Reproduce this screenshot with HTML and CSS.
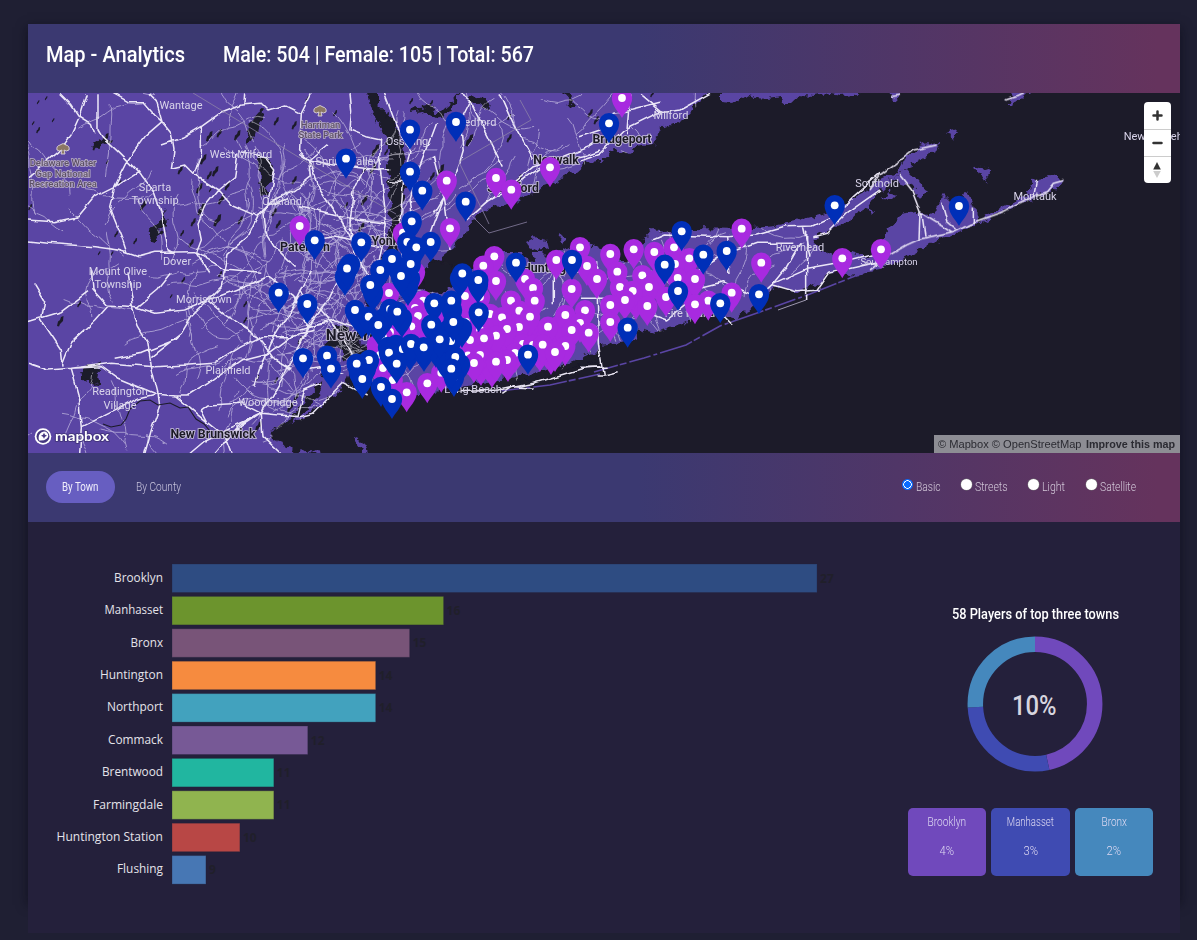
FILE: index.html
```html
<!DOCTYPE html>
<html lang="en">
<head>
<meta charset="utf-8">
<title>Map - Analytics</title>
<link rel="stylesheet" href="styles.css">
</head>
<body>
<main class="card">
  <header class="band head">
    <h1 class="fit title" data-w="139">Map - Analytics</h1>
    <div class="fit title" data-w="311">Male: 504 | Female: 105 | Total: 567</div>
  </header>

  <section class="map">
    <svg class="canvas" viewBox="28 93 1152 360" width="1152" height="360">
      <defs>
        <filter id="coast" filterUnits="userSpaceOnUse" x="20" y="80" width="1170" height="380"><feTurbulence type="fractalNoise" baseFrequency=".11" numOctaves="3" seed="4"/><feDisplacementMap in="SourceGraphic" scale="11" xChannelSelector="R" yChannelSelector="G"/></filter>
        <filter id="bend" filterUnits="userSpaceOnUse" x="20" y="80" width="1170" height="380"><feTurbulence type="fractalNoise" baseFrequency=".06" numOctaves="2" seed="9"/><feDisplacementMap in="SourceGraphic" scale="6" xChannelSelector="R" yChannelSelector="G"/><feGaussianBlur stdDeviation=".3"/></filter>
        <path id="pin" d="M0 20C-2.5 14.500-10.200 8.500-10.200 0a10.200 10.200 0 1 1 20.400 0C10.200 8.500 2.500 14.500 0 20z"/>
        <g id="tree"><path d="M-6 1q-1-4 3-5 3-3 6 0 4 1 3 5-3 2-5 0l1 4h-4l1-4q-3 2-5 0z" fill="#8b7764" stroke="#e9e2ea" stroke-width=".8"/></g>
        <clipPath id="land">
          <path d="M20 85H716L700 102 685 117 676 122 661 128 654 144 638 147 626 153 608 149 611 158 600 162 585 163 575 172 560 180 548 183 530 195 515 201 500 205 480 212 470 224 462 237 452 248 440 258 430 263 424 272 410 284 398 300 386 318 372 334 372 346 358 352 348 372 342 390 325 400 305 418 285 425 268 432 275 441 290 447 302 460H20z"/>
          <path d="M362 372 368 345 386 318 398 300 415 286 428 293 447 292 455 280 470 270 482 258 500 252 520 252 530 262 545 260 555 255 570 247 590 243 602 250 625 262 640 256 644 238 651 230 665 232 692 228 740 229 775 226 800 220 830 212 850 200 870 190 880 180 898 172 905 155 912 155 920 146 938 142 934 152 920 158 905 168 890 182 875 195 868 207 855 215 845 222 825 232 812 240 818 248 838 258 850 252 868 256 885 245 885 233 900 215 915 213 930 215 940 205 942 195 950 203 963 200 968 190 974 208 978 222 1000 208 1018 200 1030 190 1033 180 1050 176 1064 180 1050 192 1030 200 1000 213 960 232 930 244 910 256 880 270 850 276 835 270 815 285 800 292 790 290 775 285 765 300 745 310 735 322 725 315 700 315 680 325 655 332 640 328 635 340 600 345 590 355 565 368 540 376 500 382 450 388 420 395 385 395z"/>
        </clipPath>
      </defs>
      <rect x="28" y="93" width="1152" height="360" fill="#1c1b29"/>
      <g class="land" filter="url(#coast)">
        <rect x="0" y="60" width="1200" height="420" clip-path="url(#land)"/>
        <path d="M722 90H866L855 94 842 95 830 93 815 96 800 95 790 104 780 97 768 99 755 98 747 96 733 105 722 104z"/>
        <path d="M887 90h18l-4 5-6 4-7-3zM1010 90h20l-9 9-10 4-6 0 8-6zM950 132l8-2-5 9-5-2zM972 169l10-4 9 6-4 5 1 8-5-8zM906 168l5 6 10 6 6 12-6 6-7-10-12-4-10-4zM888 190l10 3-6 6-12-1zM866 204l6 8-3 4z"/>
        <path d="M526 241l8-4 12 3 2 8-10 2-8-4zM559 234l5 4-2 8-4-4zM532 252h10l8 8-14 6z"/>
        <path d="M298 453l6-5 6 4 8-4 8 6zM355 438l5-1 4 6 3 12-5-2-3-9z"/>
      </g>
      <path d="M868 271l-58 23-50 18-40 14-34 19-42 13-50 14M600 374l-50 11-50 6" fill="none" stroke="#5a45a4" stroke-width="1.6" stroke-dasharray="22 3 7 2 34 3 4 3"/>
      <g class="water" filter="url(#coast)">
        <path d="M369 90 373 115 384 132 389 150 387 168 390 200 391 225 382 262 370 295 358 325 352 346 360 346 368 325 380 295 391 262 398 240 402 205 406 168 401 140 394 120 378 105 378 90z"/>
        <path d="M326 338l10-12 12 0 8 12-3 15-8 7-6-14-8 3-4 18-4 12-3-4 5-20zM424 268l16-8 14 6 4 18-12 6-18 0-6-10zM345 343l24 2-4 16-10 6-8-10z"/>
        <path d="M500 378l30-3 40-12 20-8 10 4-30 10-40 12-30 2z"/>
        <path d="M268 430l10-4 14-8 14-20 14-15 2 8-14 18-20 16z"/>
        <path d="M252 120l7-8 5-4 2 6-8 10-4 14-5 8-2-6zM259 154l8 4 6 10-2 14-6 14-7-4 2-16zM148 228l12-6 4-12 3 14-7 8-6 10-6-2 2-8zM82 368l18-7-2 20-16-2zM81 372l10 1 8 8-4 4-12-5zM92 147l10-8 10-2-4 6-12 6z"/>
        <path d="M84 371l8 1 9 8-2 5-7-1-8-6z"/>
        <path d="M410 108l16-2 12 8 12-10 10-12-3 10-10 14-12 2-14-8-12 2zM468 95l18 2 4 12-10-2-14-6zM565 93l12 14-4 0-11-12z"/>
      </g>
      <g id="ponds" fill="#1c1b29"></g>
      <g filter="url(#bend)" fill="none" stroke="#f3effc" stroke-linejoin="round">
        <g id="minor" clip-path="url(#land)" stroke-width=".9" opacity=".55"></g>
        <g id="major" stroke-width="4.600" opacity=".95">
          <g transform="translate(28 90) scale(.3333)"><path d="M255 10 300 35 345 35 380 75 402 95 430 130 438 180 430 235 470 225 500 255 570 300 610 345 690 380 720 350 780 325M360 10 385 35 402 95 350 140 300 210 260 290 245 350 290 460 300 490M210 10 210 120 222 140 270 185 330 245 380 310 400 370 420 480 440 490M402 165 460 145 520 110 575 70 640 45 700 40 720 60 770 45 820 70 815 180 845 210 900 165M850 10 820 70M650 10 648 40M0 390 80 395 150 380 200 320 260 290 330 245M0 453 60 460 200 470 270 480 300 490 330 500 380 487 500 485 560 520 590 540 700 550M95 10 130 45 150 75 190 100 200 130M175 10 155 75 130 130 90 185 0 260M845 210 850 260 800 300 740 330 705 370 710 420 740 470 800 530M570 300 530 350 510 400 520 450 505 490 545 552M630 190 620 260 570 300M720 350 740 240 710 200 640 185M520 110 520 200 500 255M690 380 660 440 600 490 590 552"/></g>
          <g transform="translate(28 270) scale(.3333)"><path d="M0 280 60 300 130 295 250 280 380 290 480 285 560 280 640 230 700 200 780 200 860 180M130 295 150 370 160 470 155 552M310 100 330 170 360 220 370 290 390 370 395 410 370 480 350 552M160 470 240 430 330 385 385 372 440 378 480 410 540 460 590 500 610 552M440 378 480 378 540 340 640 270 720 250 800 190M130 295 220 290 270 325 385 372M190 0 195 60 235 105 330 110 390 60 430 10M300 10 315 100M370 260 460 190 490 140 540 90 580 50 590 0M240 105 200 150 130 215 105 280M20 40 50 90 40 150 100 240 105 290M0 155 100 125 180 65M540 460 520 420 540 405 640 400 700 430 810 440 830 360 880 340M700 430 630 470 560 552M610 490 700 430 760 330 830 200 850 100M700 430 705 500 760 552M540 90 620 60 720 20 800 80 840 170 900 160M640 170 690 200 740 270 790 300M540 90 600 140 690 200M680 350 700 290 740 200 800 100 850 0M320 110 380 130 470 120 540 90M260 265 340 250 440 210 460 190M480 552 530 510 700 430"/></g>
          <g transform="translate(300 90) scale(.3333)"><path d="M150 10 155 60 150 120 200 140 245 150M0 190 30 210 100 225 190 235 265 240M30 210 60 300 100 360 140 420 200 552M245 150 240 230 260 400 230 552M250 10 280 90 330 180 310 280 300 400 310 552M410 100 380 180 350 260 330 330 340 400M480 10 510 30 480 90 490 180 470 250 430 320 400 370M510 30 560 130 610 230M260 272 330 275M430 320 400 400 380 460M520 370 590 310 640 280 700 230 770 210 870 170 900 150M500 390 560 335 640 290 740 220 860 195 900 180M400 200 430 320 450 480M190 235 160 300 150 400 170 552M600 10 640 100 700 210M0 350 120 380 260 400M0 460 100 440 240 470"/></g>
          <g transform="translate(300 270) scale(.3333)"><path d="M0 440 40 430 130 340 200 375M470 365 600 360 700 340 850 295 900 290M760 0 760 100M610 370 640 350 700 355M0 60 60 120 130 200 160 260M130 0 90 80 30 160 0 220M0 180 100 150 180 180M0 300 60 290 130 310"/></g>
          <g transform="translate(580 90) scale(.3333)"><path d="M0 210 60 190 130 120 230 70 300 60 390 10M0 140 60 120 100 70 160 60 240 40M150 10 140 130M250 70 180 10M215 450 250 435 440 440 530 435 620 410 700 408 760 380 820 320 900 250M340 552 430 495 530 460 640 460M440 440 450 552M670 408 690 500M700 440 740 430 800 370 900 300"/></g>
          <g transform="translate(580 230) scale(.3333)"><path d="M0 205 80 205 260 270 330 215M310 185 430 155 530 205 580 160 680 115 820 90 900 70M330 215 420 250 460 290M580 160 620 110 660 40M580 165 650 185 720 180M50 100 55 340 70 435M680 0 680 210M710 180 745 130 900 95M0 412 80 412M50 435 70 435 110 425"/></g>
          <g transform="translate(870 90) scale(.3333)"><path d="M0 300 30 255 90 210 130 180 200 165M90 255 125 300 150 365 215 405 245 425M0 540 50 500 110 465 150 447 250 425 300 400 400 365 490 320 530 305 550 280 580 272M150 365 147 447M215 335 230 390 260 415M155 370 165 440M310 350 310 400M490 320 500 270M60 20 90 15M410 30 440 20 460 10"/></g>
        </g>
      </g>
      <g fill="none" stroke="#8f86a8" stroke-width="1" opacity=".75">
        <path d="M193 93 328 175 396 214M531 120l-72 42 30 62M471 215l18 18 38-11M520 100l11 20"/>
        <path d="M778 310l28-10" stroke="#c9c2dc"/>
      </g>
      <path d="M103 424l8 3 10-2 5-6 4-10 10-8 10-1 8 5 12-2 10 5 8-1 8 12 8 5 6 7" fill="none" stroke="#1c1b29" stroke-width="1.1"/>
      <use href="#tree" x="63" y="149"/><use href="#tree" x="320" y="111"/>
      <g class="place">
        <text x="181" y="108.500">Wantage</text><text x="241" y="157.500">West Milford</text>
        <text x="155" y="191">Sparta</text><text x="155" y="204">Township</text>
        <text x="177" y="265">Dover</text><text x="118" y="275">Mount Olive</text><text x="118" y="288">Township</text>
        <text x="204" y="303">Morristown</text><text x="228" y="373.500">Plainfield</text>
        <text x="120" y="395">Readington</text><text x="120" y="408.500">Village</text>
        <text x="268" y="406">Woodbridge</text><text x="282" y="205">Oakland</text>
        <text x="347" y="165">Spring Valley</text><text x="407" y="145">Ossining</text><text x="477" y="126">Bedford</text>
        <text x="671" y="118.500">Milford</text><text x="800" y="251">Riverhead</text><text x="877" y="186.500">Southold</text>
        <text x="1035" y="200">Montauk</text><text x="889" y="265" style="font-size:9.5px">Southampton</text>
        <text x="473" y="393">Long Beach</text><text x="1161" y="140">New Shoreham</text><text x="690" y="317">Fire Island</text>
      </g>
      <g class="park">
        <text x="63" y="165.500">Delaware Water</text><text x="63" y="176.500">Gap National</text><text x="63" y="187">Recreation Area</text>
        <text x="320.500" y="127.500">Harriman</text><text x="320.500" y="138">State Park</text>
      </g>
      <g class="city">
        <text x="305" y="251">Paterson</text><text x="394" y="245">Yonkers</text><text x="556" y="164">Norwalk</text>
        <text x="513" y="192">Stamford</text><text x="622" y="143">Bridgeport</text><text x="553" y="272">Huntington</text>
        <text x="213" y="437.500">New Brunswick</text><text x="359" y="340" style="font-size:15.5px">New York</text>
      </g>
      <g id="pins"></g>
      <g class="logo">
        <circle cx="43" cy="436.500" r="8.300" fill="#fff"/>
        <circle cx="43" cy="436.500" r="6.500" fill="#453680"/>
        <path d="M39 440.500q-1.500-6 2.600-8.300 3.600-1.700 5.700.8 2.300 3.300-.7 5.700-2.800 2.400-7.600 1.800z" fill="#fff"/>
        <path d="M44 432.700l1 2 2 1-2 1-1 2-1-2-2-1 2-1z" fill="#453680"/>
        <text x="55" y="440.500" textLength="54" lengthAdjust="spacingAndGlyphs">mapbox</text>
      </g>
    </svg>
    <div class="zoomer">
      <button aria-label="Zoom in"><svg width="27" height="27"><path d="M13.500 9.500v8M9.500 13.500h8" stroke="#333" stroke-width="2.500" stroke-linecap="round"/></svg></button>
      <button aria-label="Zoom out"><svg width="27" height="27"><path d="M9.500 13h8" stroke="#333" stroke-width="2.500" stroke-linecap="round"/></svg></button>
      <button aria-label="Reset north"><svg width="27" height="27"><path d="M13 5l3.800 7.500H9.200z" fill="#333"/><path d="M13 21l3.800-7H9.200z" fill="#ccc"/></svg></button>
    </div>
    <div class="credit"><span class="fit" data-w="143.500">© Mapbox © OpenStreetMap</span><b class="fit" data-w="89">Improve this map</b></div>
  </section>

  <nav class="band tools">
    <a class="tab on"><span class="fit" data-w="36.500">By Town</span></a>
    <a class="tab"><span class="fit" data-w="45">By County</span></a>
    <div class="styles">
      <label class="o1"><i class="dot sel"></i><span class="fit" data-w="24.500">Basic</span></label>
      <label class="o2"><i class="dot"></i><span class="fit" data-w="32.500">Streets</span></label>
      <label class="o3"><i class="dot"></i><span class="fit" data-w="23">Light</span></label>
      <label><i class="dot"></i><span class="fit" data-w="36">Satellite</span></label>
    </div>
  </nav>

  <section class="body">
    <svg class="chart" id="chart" width="860" height="410" viewBox="28 522 860 410"></svg>
    <aside class="side">
      <h2><span class="fit" data-w="167">58 Players of top three towns</span></h2>
      <svg class="donut" width="136" height="136" viewBox="-68 -68 136 136">
        <g fill="none" stroke-width="15.500" transform="rotate(-90)">
          <circle r="59.700" pathLength="58" stroke="#7049bc" stroke-dasharray="27 31"/>
          <circle r="59.700" pathLength="58" stroke="#3f4bb2" stroke-dasharray="16 42" stroke-dashoffset="-27"/>
          <circle r="59.700" pathLength="58" stroke="#4588bd" stroke-dasharray="15 43" stroke-dashoffset="-43"/>
        </g>
        <text x="-23" y="10.500" textLength="44.500" lengthAdjust="spacingAndGlyphs">10%</text>
      </svg>
      <div class="tiles">
        <div class="tile t1"><span class="fit" data-w="38.500">Brooklyn</span><span class="fit" data-w="14.500">4%</span></div>
        <div class="tile t2"><span class="fit" data-w="47">Manhasset</span><span class="fit" data-w="14.500">3%</span></div>
        <div class="tile t3"><span class="fit" data-w="25.500">Bronx</span><span class="fit" data-w="14.500">2%</span></div>
      </div>
    </aside>
  </section>
</main>
<script src="app.js"></script>
</body>
</html>
```

FILE: styles.css
```css
* { box-sizing: border-box; }
body { margin: 0; background: #1f1f33; font-family: Roboto, "Liberation Sans", sans-serif; color: #fff; height: 940px; overflow: hidden; }
.card { width: 1152px; height: 876px; margin: 24px 0 0 28px; box-shadow: 0 4px 10px 1px rgba(8, 8, 20, .5); }
.band { height: 69px; display: flex; align-items: center; background: linear-gradient(90deg, #3b3971 53%, #65335d 98%); }
.head { padding: 0 18px 7px; gap: 37.5px; }
.fit { display: inline-block; white-space: nowrap; transform-origin: 0 50%; flex: none; }
.title { margin: 0; font-size: 22px; font-weight: 500; line-height: 30px; }

.map { position: relative; height: 360px; overflow: hidden; }
.canvas { display: block; }
.land { fill: #5a45a4; }
.water { fill: #1c1b29; }
.place { font: 11px Roboto, sans-serif; fill: #d9d4ea; text-anchor: middle; }
.park { font: 500 9.5px Roboto, sans-serif; fill: #5d5068; stroke: #bcb2c8; stroke-width: 1.4px; paint-order: stroke; text-anchor: middle; }
.city { font: 700 12.3px Roboto, sans-serif; fill: #1b1925; stroke: #c9c2dc; stroke-width: 1.7px; paint-order: stroke; text-anchor: middle; }
.logo { font: 700 14px Lato, sans-serif; fill: #fff; stroke-linejoin: round; }
.logo text { stroke: #453680; stroke-width: 2px; paint-order: stroke; }
.zoomer { position: absolute; top: 9px; right: 9px; width: 27px; height: 81px; border-radius: 4px; background: #fff; overflow: hidden; }
.zoomer button { display: block; width: 27px; height: 27px; padding: 0; border: 0; background: none; overflow: hidden; }
.zoomer button + button { border-top: 1px solid #ccc; }
.zoomer svg { display: block; }
.credit { position: absolute; right: 0; bottom: 0; width: 246px; height: 18px; padding-left: 4px; display: flex; gap: 4px; align-items: center; background: #8d8d94; color: #2b2b32; font: 11px "Liberation Sans", sans-serif; }

.tools { padding: 0 44px 2px 18px; font-size: 12px; color: #c8c4dd; font-weight: 300; }
.tab { height: 32px; padding: 0 16px; border-radius: 16px; display: flex; align-items: center; margin-right: 5.5px; }
.on { background: #675ec1; color: #f0eefb; font-weight: 400; }
.styles { margin-left: auto; display: flex; color: #d2c7d8; }
.styles label { display: flex; align-items: center; gap: 3px; }
.dot { width: 11px; height: 11px; border-radius: 50%; background: #fff; margin-bottom: 4px; box-shadow: 0 0 0 .5px #767676; }
.sel { background: radial-gradient(circle, #0a6cff 3.1px, #fff 3.6px, #fff 4px, #0a6cff 4.4px); box-shadow: none; }
.o1 { margin-right: 20.5px; }
.o2 { margin-right: 21px; }
.o3 { margin-right: 21px; }

.body { height: 411px; display: flex; background: #24203b; }
.chart text { font-family: "Open Sans", "Noto Sans", sans-serif; }
.label { font-size: 12.5px; fill: #e4e3ea; }
.value { font-size: 12px; font-weight: 700; fill: #201f2a; }
.side { width: 245px; margin-left: 20px; padding-top: 84px; display: flex; flex-direction: column; align-items: center; }
.side h2 { margin: 0 0 0 10px; height: 30px; line-height: 17px; font-size: 14px; font-weight: 500; }
.donut { display: block; margin: 0 0 36px 9px; }
.donut text { font: 500 28px Roboto, sans-serif; fill: #d7d5df; }
.tiles { display: grid; grid-template-columns: 78px 79px 78px; gap: 5px; }
.tile { height: 68px; border-radius: 5px; padding-top: 7px; display: flex; flex-direction: column; align-items: center; gap: 15px; font-size: 12px; font-weight: 300; line-height: 14px; color: #ded9f2; }
.t1 { background: #7049bc; }
.t2 { background: #3f4bb2; }
.t3 { background: #4588bd; }
.tile .fit { transform-origin: 50% 50%; }
```

FILE: app.js
```js
// Squeeze condensed labels to their set width while keeping them in the flow.
document.querySelectorAll('.fit').forEach(function (el) {
  var want = parseFloat(el.dataset.w), have = el.getBoundingClientRect().width;
  el.style.transform = 'scaleX(' + want / have + ')';
  if (!el.parentNode.classList.contains('tile')) el.style.marginRight = (want - have) + 'px';
});

// Town bars
var towns = [
  ['Brooklyn', 27, 49, '#2e4c82'], ['Manhasset', 16, 58.500, '#6c942d'], ['Bronx', 15, 32.500, '#785478'],
  ['Huntington', 14, 63, '#f68b3f'], ['Northport', 14, 56, '#42a2be'], ['Commack', 12, 55, '#775996'],
  ['Brentwood', 11, 61, '#21b6a0'], ['Farmingdale', 11, 70, '#90b44f'], ['Huntington Station', 10, 106.500, '#b84745'],
  ['Flushing', 9, 46, '#4777b4']
];
document.getElementById('chart').innerHTML = towns.map(function (t, i) {
  var y = 564 + i * 32.4, w = (t[1] - 8) * 33.95;
  return '<rect x="172" y="' + y + '" width="' + w + '" height="28.500" fill="' + t[3] + '" stroke="#24203b" stroke-opacity=".3"/>' +
    '<text class="label" x="' + (163 - t[2]) + '" y="' + (y + 17.700) + '" textLength="' + t[2] + '" lengthAdjust="spacingAndGlyphs">' + t[0] + '</text>' +
    '<text class="value" x="' + (175 + w) + '" y="' + (y + 18.500) + '">' + t[1] + '</text>';
}).join('');

// Small roads and ponds from a fixed seed
var seed = 77;
function rnd() { seed = (seed * 16807) % 2147483647; return seed / 2147483647; }
function roads(n, x, y, w, h, len) {
  var d = '';
  for (var i = 0; i < n; i++) {
    var px = x + rnd() * w, py = y + rnd() * h, a = rnd() * 6.28;
    d += 'M' + px.toFixed(1) + ' ' + py.toFixed(1);
    for (var k = 0; k < len; k++) {
      a += (rnd() - .5) * .9;
      px += Math.cos(a) * 8; py += Math.sin(a) * 8;
      d += 'L' + px.toFixed(1) + ' ' + py.toFixed(1);
    }
  }
  return '<path d="' + d + '"/>';
}
document.getElementById('minor').innerHTML =
  roads(46, 28, 93, 230, 360, 9) + roads(100, 235, 170, 140, 240, 9) + roads(75, 300, 190, 110, 190, 8) +
  roads(38, 380, 93, 330, 110, 7) + roads(55, 480, 250, 250, 110, 6) + roads(14, 700, 230, 200, 60, 6);

var ponds = [[38,102,2],[46,98,2],[33,123,2],[38,130,3],[53,120,2],[105,138,5],[95,146,4],[107,162,2],[209,136,5],[219,133,4],[237,135,5],[276,121,4],[294,125,4],[203,159,5],[215,171,5],[209,175,4],[180,170,4],[199,188,5],[210,190,2],[227,186,4],[201,209,6],[217,220,6],[221,199,5],[193,222,4],[182,233,3],[191,243,4],[240,220,4],[278,224,4],[274,212,4],[294,180,4],[116,234,3],[135,241,3],[112,253,2],[99,253,2],[30,207,3],[120,182,2],[143,205,5],[60,321,5],[79,304,3],[183,280,3],[171,296,2],[220,274,3],[245,304,3],[245,320,3],[307,99,3],[335,113,3],[387,115,3],[375,150,6],[373,168,5],[386,152,3],[364,200,5],[364,170,3],[346,205,3],[361,227,5],[411,101,3],[469,140,6],[440,170,6],[432,176,4],[509,117,3],[509,138,4],[519,178,4],[431,103,3],[596,120,4],[590,113,4],[652,94,3],[300,340,4],[290,407,5],[296,397,4],[276,380,3],[257,378,3],[258,426,5]];
document.getElementById('ponds').innerHTML = ponds.map(function (p) {
  var x = p[0], y = p[1], r = p[2];
  return '<path d="M' + (x - r * .6) + ' ' + (y + r) + 'l' + r * .2 + ' ' + (-r * .9) + ' ' + r * .4 + ' ' + (-r * .3) + ' ' + r * .2 + ' ' + (-r * .6) + ' ' + r * .5 + ' ' + (-r * .2) + ' ' + (-r * .1) + ' ' + r + ' ' + (-r * .6) + ' ' + r * .6 + ' ' + (-r * .2) + ' ' + r * .5 + 'z"/>';
}).join('');

// Player markers: [x, y] of the white dot
var female = [[622,98],[550,167.3],[496,178],[446.7,180.7],[511.3,189.7],[299.7,226],[450,228.3],[741.7,228.7],[403,232.7],[580,247.3],[674,247.3],[633.7,249.3],[881,249.3],[654.3,252],[610.3,254],[494.3,256.3],[689.3,258.3],[842.3,258.3],[556.3,260],[761.3,262.7],[675,264],[483.3,265.7],[587,266],[617.3,271.7],[415,272],[642.3,275.3],[677.7,278],[525,279],[597,279],[695,279],[496,281],[620,287],[649,287],[533,288],[571.7,289],[632.7,291],[731.7,292.7],[389,293],[465,296],[480,297],[666,297],[625,300],[423,300.7],[511,300.7],[534.7,300.7],[708.3,300.7],[695,304.3],[610.3,305],[647.3,306],[415,308],[585,310.3],[519.3,310.7],[426.7,313],[490,314],[565.3,315],[418,316],[530,316.7],[502,317.3],[610.3,322],[466,322],[580,323],[411.3,326.3],[548,326.7],[519,327],[507,329],[400,330],[390,332],[480,330],[571.7,330],[588.7,332.7],[496,335.7],[383,337],[484,338.3],[470,340],[523,344],[533,345],[542.7,344.7],[565.3,346],[555,352],[515,353],[468,355.3],[480,355],[380,355],[507,360],[496,361.7],[474,363],[383,368],[441.3,372.7],[392.7,380],[427.3,383.3],[406.7,392.3]];
var male = [[456,122],[609,123.3],[410,129.7],[346,158.7],[410,171.7],[422.3,190.7],[465.7,201.7],[834.7,205.3],[959,206],[411.7,221.3],[681.7,231.3],[314.7,240.3],[407.3,242],[361.3,242.3],[430.7,242],[416.3,247.3],[726.7,251],[703.3,254.7],[392,259],[572,260],[516,262.7],[410.7,264],[664.7,264.7],[347,268.5],[380.3,270],[401,276],[462.3,273.5],[478.3,280],[370.3,285],[678,291],[278.7,292.7],[759,294.3],[451.3,300.7],[434.3,303.3],[720.3,303.3],[307.3,304],[390,309],[355,310],[397.3,311.7],[478.7,312.3],[368.7,316.7],[451,341],[453.3,322],[378.3,325],[431.3,324.7],[627.7,327.7],[439.7,339.3],[402.7,349],[411,344],[423.7,347.3],[389,352.7],[528,354.7],[327,355.7],[454,377],[455.3,357],[303,358.3],[369,360],[396.7,363.7],[356.7,363.7],[331,368.7],[451.3,368.7],[362.3,379],[381,387],[392,399]];
// Markers whose dots are covered by their neighbours
var femaleUnder = [[476,308],[492,325],[474,330],[460,345],[478,345],[488,350],[502,348],[510,340],[535,330],[545,338],[556,340],[551,355],[540,352],[481,366],[492,368],[508,362],[395,318],[404,318],[385,345],[377,345],[378,365],[404,338],[420,330],[388,374],[560,325],[636,300],[656,280],[684,268],[685,285],[470,300],[455,312],[440,315]];
var maleUnder = [[408,286],[410,278],[404,268],[345,276],[350,264],[384,318],[373,292],[412,255],[388,347],[396,345],[410,351],[424,352],[447,350],[436,348],[448,330],[462,328],[460,278],[452,310],[460,364],[446,362],[359,372],[366,368],[402,318],[362,319],[478,284]];
function mark(list, color, bare) {
  return list.map(function (p) {
    return '<use href="#pin" x="' + p[0] + '" y="' + p[1] + '" fill="' + color + '"/>' +
      (bare ? '' : '<circle cx="' + p[0] + '" cy="' + p[1] + '" r="3.900" fill="#fff"/>');
  }).join('');
}
document.getElementById('pins').innerHTML =
  mark(femaleUnder, '#a82ae0', true) + mark(female, '#a82ae0') +
  mark(maleUnder, '#002fb8', true) + mark(male, '#002fb8');
```
